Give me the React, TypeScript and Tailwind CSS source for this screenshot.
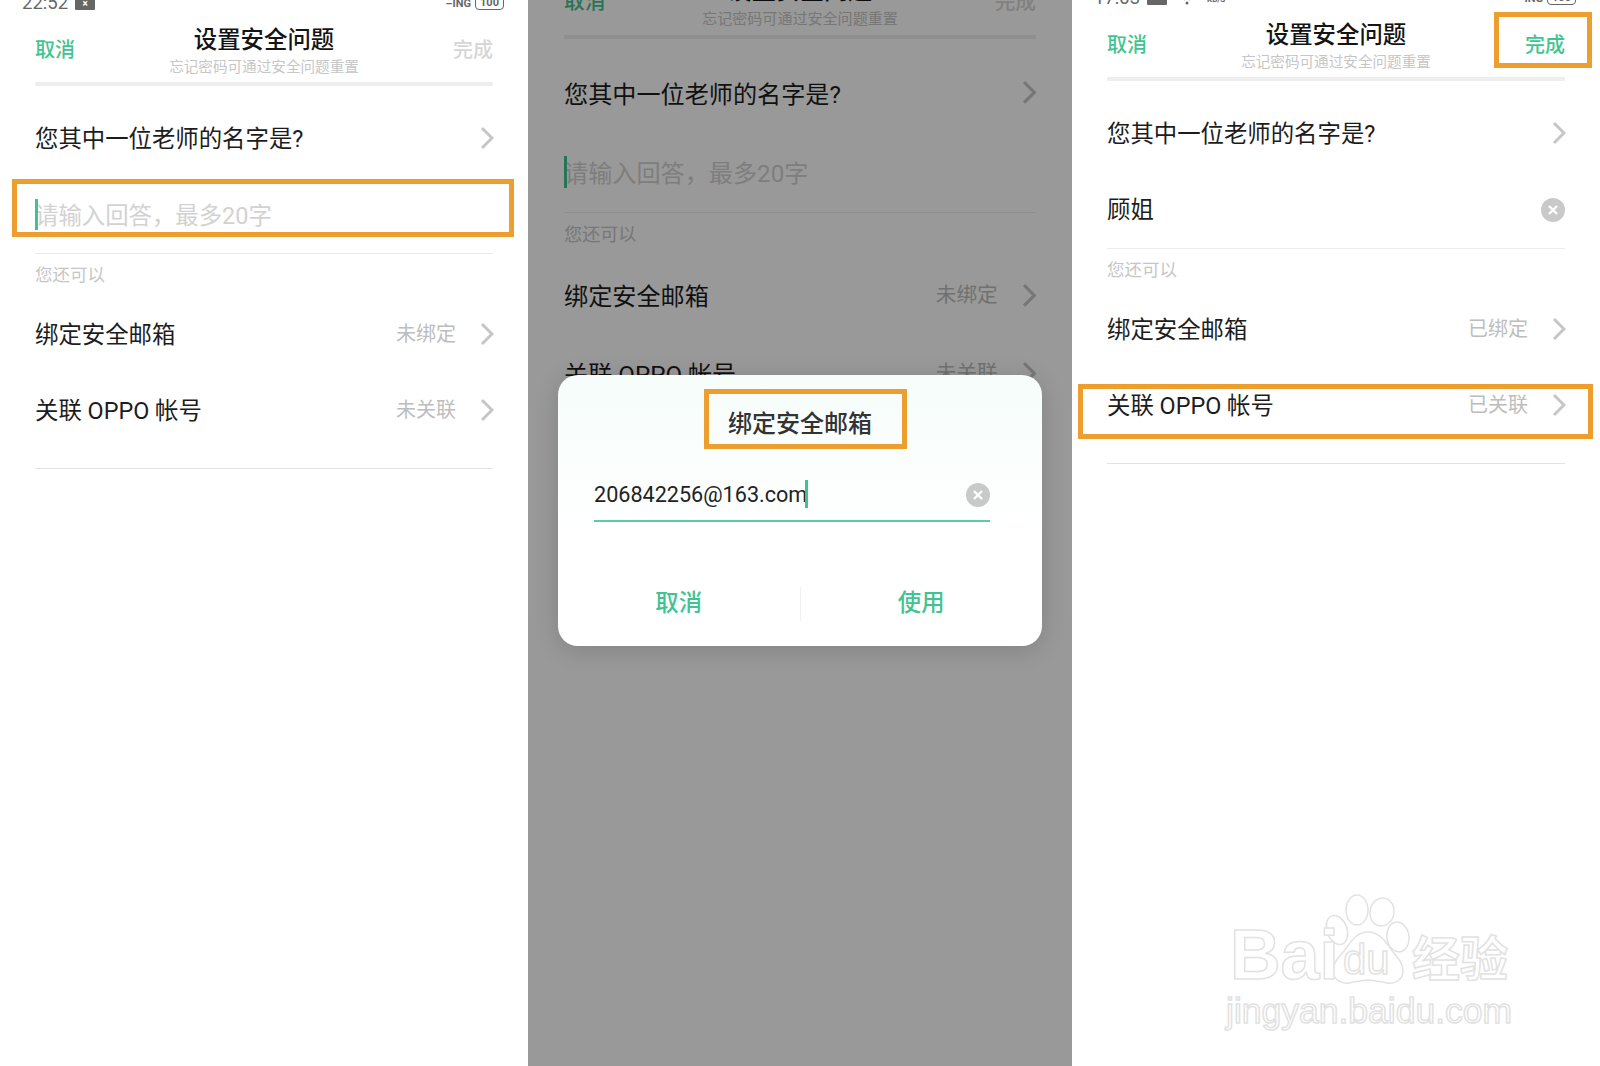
import type { ReactNode } from "react";

const GREEN = "text-[#3fc491]";

function Chevron() {
  return (
    <svg width="14" height="24" viewBox="0 0 14 24" fill="none" className="-mr-[1px] shrink-0">
      <path d="M2 2l10 10L2 22" stroke="#c6c6c6" strokeWidth="3" />
    </svg>
  );
}

function ClearIcon() {
  return (
    <svg width="24" height="24" viewBox="0 0 24 24" className="shrink-0">
      <circle cx="12" cy="12" r="12" fill="#c9c9c9" />
      <path d="M8 8l8 8M16 8l-8 8" stroke="#fff" strokeWidth="2.4" />
    </svg>
  );
}

function Caret({ className }: { className: string }) {
  return <span className={`absolute w-[3px] bg-[#3fc491] ${className}`} />;
}

function LinkRow({ label, value, box }: { label: string; value: string; box?: boolean }) {
  return (
    <div className="relative flex h-[76px] items-center text-[23.4px] text-[#1c1c1c]">
      <span className="flex-1 pt-[4px]">{label}</span>
      <span className="mr-[24px] text-[20px] text-[#bdbdbd]">{value}</span>
      <Chevron />
      {box && <div className="absolute -left-[29px] -right-[28px] top-[17px] h-[55px] border-[5px] border-[#ec9f2e]" />}
    </div>
  );
}

interface ScreenProps {
  status: ReactNode;
  doneActive?: boolean;
  answer?: string;
  email: string;
  link: string;
  inputBox?: boolean;
  linkBox?: boolean;
}

function Screen({ status, doneActive, answer, email, link, inputBox, linkBox }: ScreenProps) {
  return (
    <div className="px-[35px]">
      {status}
      <header className="relative -mt-[3px] flex h-[70px] items-start">
        <span className={`mt-[26px] w-[60px] text-[20px] font-medium leading-6 ${GREEN}`}>取消</span>
        <div className="flex-1 pt-[13px] text-center">
          <div className="text-[23.4px] font-medium leading-[30px] text-[#141414]">设置安全问题</div>
          <div className="mt-[2px] text-[14.6px] leading-[20px] text-[#c6c6c6]">忘记密码可通过安全问题重置</div>
        </div>
        <span className={`mt-[26px] w-[60px] text-right text-[20px] font-medium leading-6 ${doneActive ? GREEN : "text-[#d6d6d6]"}`}>
          完成
        </span>
        {doneActive && <div className="absolute -right-[27px] top-[5px] h-[56px] w-[98px] border-[5px] border-[#ec9f2e]" />}
      </header>
      <div className="h-1 bg-[#eeeeee]" />
      <div className="flex h-[104px] items-center justify-between text-[23.4px] text-[#1c1c1c]">
        <span className="pt-[4px]">您其中一位老师的名字是?</span>
        <Chevron />
      </div>
      <div className="relative flex h-[50px] items-center justify-between text-[23.4px]">
        {answer ? (
          <>
            <span className="pt-[2px] text-[#1c1c1c]">{answer}</span>
            <ClearIcon />
          </>
        ) : (
          <>
            <Caret className="left-0 top-[9px] h-[31px]" />
            <span className="pt-[4px] text-[#d2d2d2]">请输入回答，最多20字</span>
          </>
        )}
        {inputBox && <div className="absolute -left-[23px] -right-[21px] -top-[11px] h-[58px] border-[5px] border-[#ec9f2e]" />}
      </div>
      <div className="mt-[13px] h-px bg-[#ececec]" />
      <div className="flex h-[42px] items-center text-[17.5px] text-[#c6c6c6]">您还可以</div>
      <LinkRow label="绑定安全邮箱" value={email} />
      <LinkRow label="关联 OPPO 帐号" value={link} box={linkBox} />
      <div className="mt-[20px] h-px bg-[#e2e2e2]" />
    </div>
  );
}

function StatusBar({ time, extra }: { time: string; extra: ReactNode }) {
  return (
    <div className="-mx-[13px] flex h-[15px] items-end justify-between overflow-hidden text-[#666]">
      <div className="flex items-end gap-[7px]">
        <span className="text-[18.5px] leading-[24px]">{time}</span>
        {extra}
      </div>
      <div className="mb-[5px] flex items-end gap-[4px] pr-[2px]">
        <span className="flex flex-col items-end text-[11px] font-bold leading-[12px]">
          <span>CHARG</span>
          <span>–ING</span>
        </span>
        <span className="flex h-[14px] w-[29px] items-center justify-center rounded-[4px] border-[1.5px] border-[#666] text-[11px] font-bold">
          100
        </span>
      </div>
    </div>
  );
}

function Watermark() {
  const stroke = "text-white [-webkit-text-stroke:1.5px_#e2e2e2]";
  return (
    <div className="absolute left-[1230px] top-[892px] h-[142px] w-[290px]">
      <svg width="120" height="100" viewBox="0 0 120 100" fill="#fff" stroke="#e2e2e2" strokeWidth="1.5" className="absolute left-[78px] top-0">
        <ellipse cx="29" cy="38" rx="10" ry="15" transform="rotate(-20 29 38)" />
        <ellipse cx="49" cy="18" rx="11" ry="15" />
        <ellipse cx="74" cy="20" rx="12" ry="14" transform="rotate(10 74 20)" />
        <ellipse cx="90" cy="45" rx="11" ry="15" transform="rotate(-8 90 45)" />
        <path d="M60 40c12 0 18 10 25 20 6 7 10 12 10 19 0 9-8 13-16 12-7-1-13-3-19-3-6 0-12 2-19 3-8 1-16-4-16-12 0-8 5-13 11-20 7-9 12-19 24-19z" />
      </svg>
      <span className={`absolute left-0 top-[23px] font-['Liberation_Sans',sans-serif] text-[70px] font-bold leading-[80px] ${stroke}`}>Bai</span>
      <span className={`absolute left-[113px] top-[48px] font-['Liberation_Sans',sans-serif] text-[42px] leading-[40px] ${stroke}`}>du</span>
      <span className={`absolute left-[182px] top-[36px] text-[48px] font-bold leading-[64px] ${stroke}`}>经验</span>
      <span className={`absolute left-[-4px] top-[99px] whitespace-nowrap font-['Liberation_Sans',sans-serif] text-[35.5px] leading-[40px] ${stroke}`}>jingyan.baidu.com</span>
    </div>
  );
}

function Dialog() {
  return (
    <div className="absolute left-[30px] top-[375px] h-[271px] w-[484px] rounded-[20px] bg-gradient-to-b from-[#f6fdfa] to-[#ffffff] to-60% shadow-[0_4px_24px_rgba(0,0,0,0.15)]">
      <div className="relative flex h-[100px] items-start justify-center pt-[31px] text-[24px] font-medium leading-[36px] text-[#333]">
        绑定安全邮箱
        <div className="absolute left-[146px] top-[14px] h-[60px] w-[203px] border-[5px] border-[#ec9f2e]" />
      </div>
      <div className="relative ml-[36px] mr-[52px] flex h-[47px] items-center justify-between border-b-2 border-[#5ccda2] pb-[5px] text-[21.6px] text-[#222]">
        <span>206842256@163.com</span>
        <ClearIcon />
        <Caret className="left-[211px] top-[5px] h-[28px]" />
      </div>
      <div className="mt-[64px] flex items-center text-[23.4px] font-medium">
        <span className={`flex-1 text-center ${GREEN}`}>取消</span>
        <span className="h-[34px] w-px bg-[#f0f0f0]" />
        <span className={`flex-1 text-center ${GREEN}`}>使用</span>
      </div>
    </div>
  );
}

export default function App() {
  return (
    <div className="relative flex h-[1066px] w-[1600px] overflow-hidden bg-white font-['Roboto','Noto_Sans_CJK_SC',sans-serif]">
      <section className="w-[528px]">
        <Screen
          status={
            <StatusBar
              time="22:52"
              extra={
                <span className="mb-[5px] flex h-[14px] w-[20px] items-end justify-center rounded-[1px] bg-[#666] text-[10px] font-bold leading-[12px] text-white">
                  ×
                </span>
              }
            />
          }
          email="未绑定"
          link="未关联"
          inputBox
        />
      </section>
      <section className="relative w-[544px] overflow-hidden">
        <div className="-mt-[48px] [zoom:1.032]">
          <Screen status={<div className="h-[15px]" />} email="未绑定" link="未关联" />
        </div>
        <div className="absolute inset-0 bg-black/40" />
        <Dialog />
      </section>
      <section className="w-[528px]">
        <div className="-mt-[5px]">
          <Screen
            status={
              <StatusBar
                time="17:03"
                extra={
                  <span className="flex items-end gap-[14px]">
                    <span className="mb-[5px] h-[12px] w-[20px] rounded-[1px] bg-[#666]" />
                    <svg width="12" height="10" viewBox="0 0 12 10" className="mb-[5px]">
                      <path d="M1 2a7 7 0 0 1 10 0M3 5a4 4 0 0 1 6 0" stroke="#666" strokeWidth="1.4" fill="none" />
                      <circle cx="6" cy="8" r="1.5" fill="#666" />
                    </svg>
                    <span className="mb-[5px] text-[8px] font-bold leading-[10px]">KB/S</span>
                  </span>
                }
              />
            }
            answer="顾姐"
            email="已绑定"
            link="已关联"
            doneActive
            linkBox
          />
        </div>
      </section>
      <Watermark />
    </div>
  );
}
